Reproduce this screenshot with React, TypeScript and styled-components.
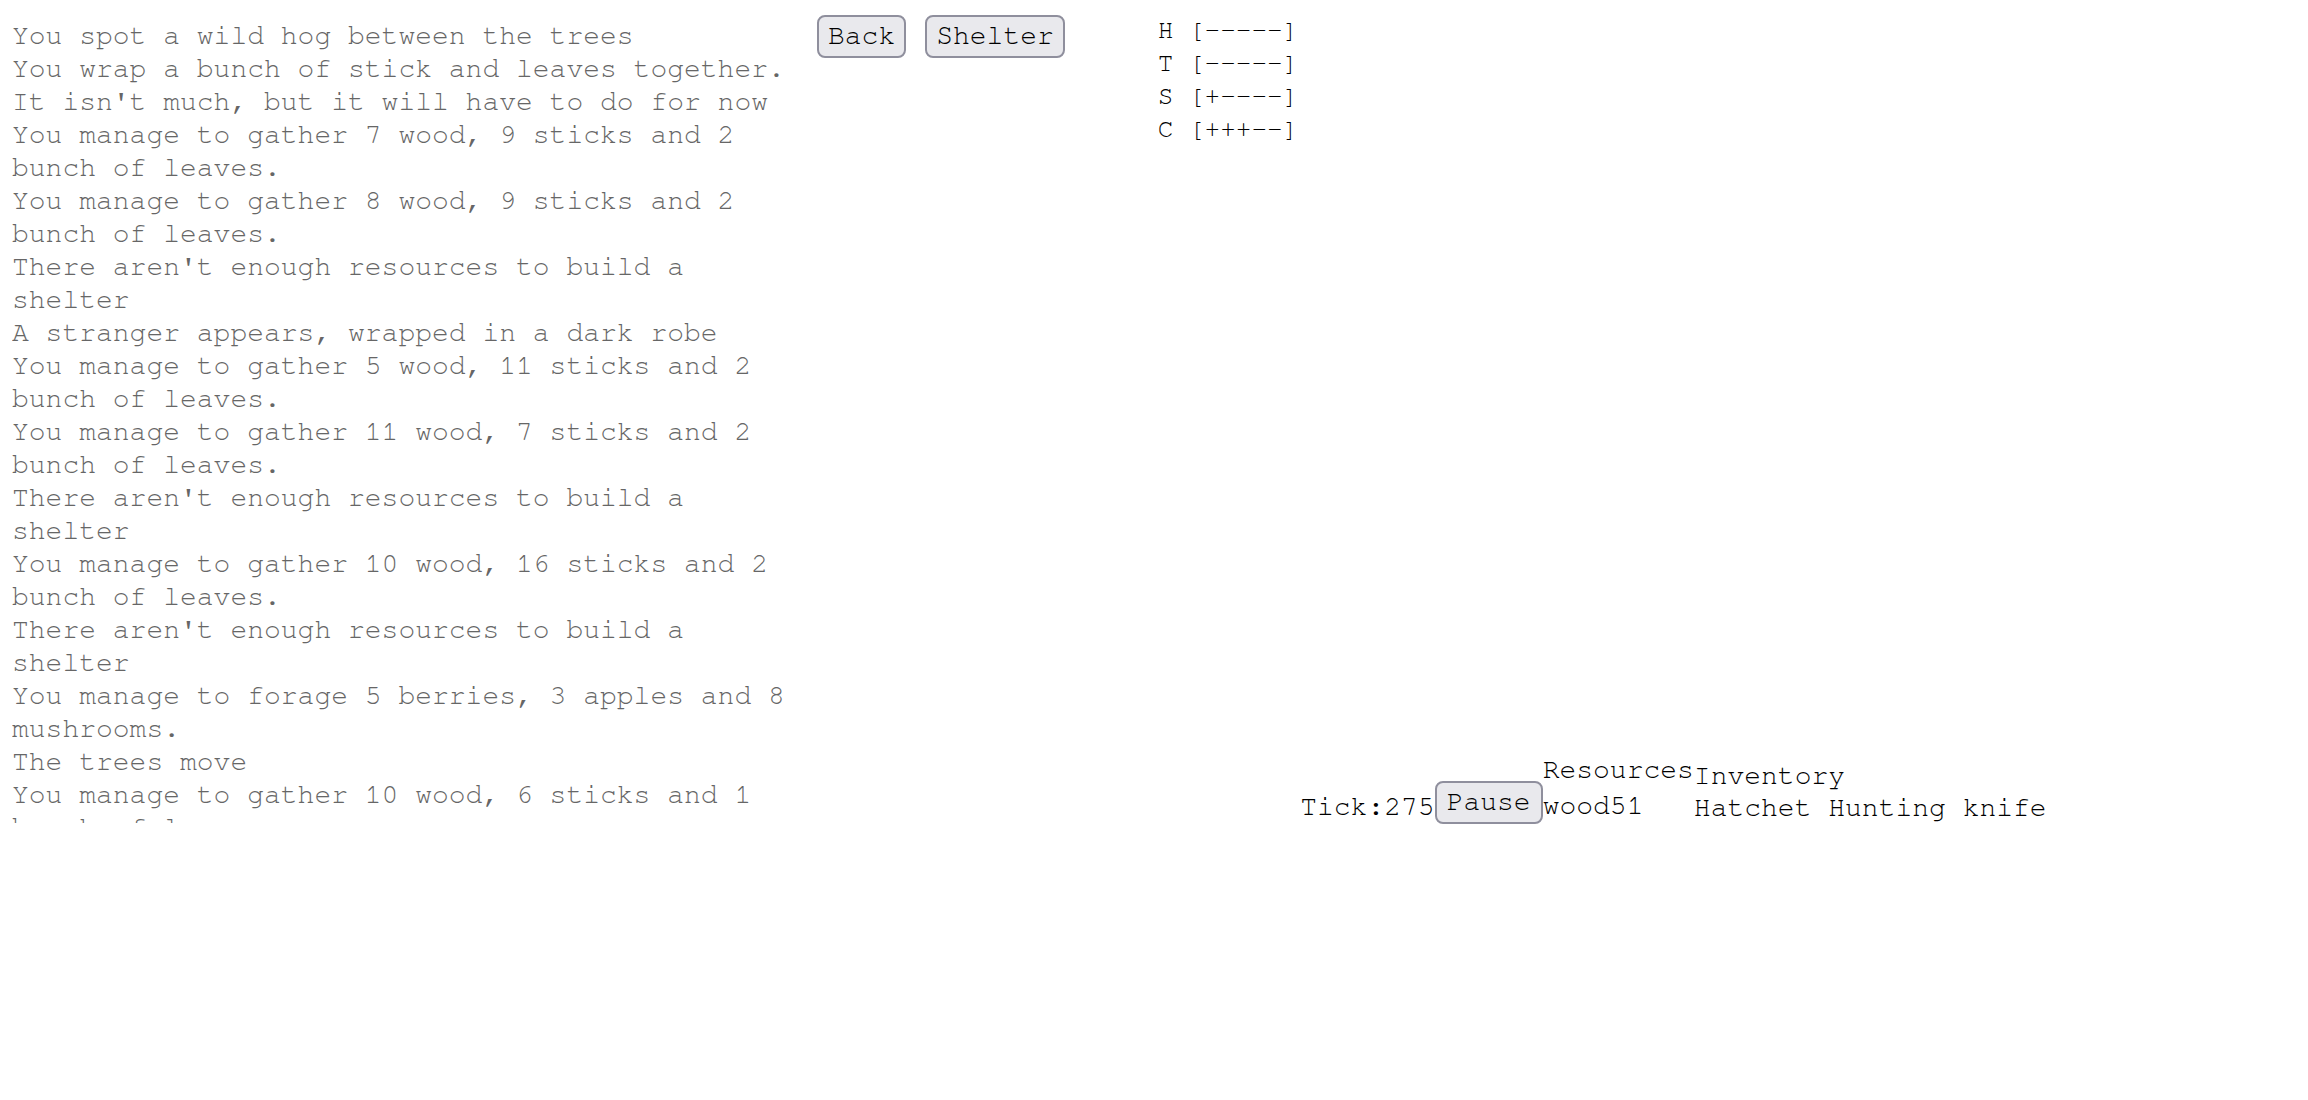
import * as React from "react";
import styled, { createGlobalStyle } from "styled-components";

const mono = `"Nimbus Mono PS", "Nimbus Mono", FreeMono, Courier, "Liberation Mono", monospace`;

const GlobalStyle = createGlobalStyle`
  html, body {
    margin: 0;
    padding: 0;
    background: #ffffff;
  }
  body {
    padding: 16px 16px 16px 12px;
    font-family: ${mono};
    color: #000000;
  }
`;

const Page = styled.div`
  display: flex;
  align-items: flex-start;
`;

const Log = styled.div`
  width: 794px;
  height: 803px;
  padding-top: 4px;
  overflow: hidden;
  font-size: 28px;
  line-height: 33px;
  color: #666666;
`;

const Entry = styled.div`
  white-space: normal;
`;

const Controls = styled.div`
  display: flex;
  gap: 19px;
  margin-left: 11px;
  margin-top: -1px;
`;

const Button = styled.button<{ wide?: boolean }>`
  box-sizing: border-box;
  height: 43px;
  font-family: ${mono};
  font-size: 28px;
  line-height: 39px;
  color: #000000;
  background: #e9e9ed;
  border: 2px solid #8f8f9d;
  border-radius: 8px;
  padding: 0 ${p => (p.wide ? 10 : 9)}px;
  margin: 0;
  cursor: pointer;
`;

const Status = styled.div`
  margin-left: 93px;
  margin-top: -2px;
  font-size: 26px;
  line-height: 33px;
  white-space: pre;
`;

const Footer = styled.div`
  align-self: flex-end;
  display: flex;
  align-items: flex-end;
  margin-left: 2px;
  margin-bottom: -1px;
  font-size: 28px;
  line-height: 33px;
`;

const Tick = styled.span`
  white-space: pre;
`;

const Table = styled.div<{ pitch: number }>`
  display: flex;
  flex-direction: column;
  font-size: 28px;
  line-height: ${p => p.pitch}px;
  white-space: pre;
`;

const log = [
  "You spot a wild hog between the trees",
  "You wrap a bunch of stick and leaves together. It isn't much, but it will have to do for now",
  "You manage to gather 7 wood, 9 sticks and 2 bunch of leaves.",
  "You manage to gather 8 wood, 9 sticks and 2 bunch of leaves.",
  "There aren't enough resources to build a shelter",
  "A stranger appears, wrapped in a dark robe",
  "You manage to gather 5 wood, 11 sticks and 2 bunch of leaves.",
  "You manage to gather 11 wood, 7 sticks and 2 bunch of leaves.",
  "There aren't enough resources to build a shelter",
  "You manage to gather 10 wood, 16 sticks and 2 bunch of leaves.",
  "There aren't enough resources to build a shelter",
  "You manage to forage 5 berries, 3 apples and 8 mushrooms.",
  "The trees move",
  "You manage to gather 10 wood, 6 sticks and 1 bunch of leaves.",
  "You manage to gather 6 wood, 8 sticks and 2 bunch of leaves.",
];

const bars = ["H [-----]", "T [-----]", "S [+----]", "C [+++--]"];

export default function App() {
  return (
    <>
      <GlobalStyle />
      <Page>
        <Log>
          {log.map((line, i) => (
            <Entry key={i}>{line}</Entry>
          ))}
        </Log>
        <Controls>
          <Button>Back</Button>
          <Button>Shelter</Button>
        </Controls>
        <Status>
          {bars.map(b => (
            <div key={b}>{b}</div>
          ))}
        </Status>
        <Footer>
          <Tick>Tick:275</Tick>
          <Button wide>Pause</Button>
          <Table pitch={36}>
            <span>Resources</span>
            <span>wood51</span>
          </Table>
          <Table pitch={32}>
            <span>Inventory</span>
            <span>Hatchet Hunting knife</span>
          </Table>
        </Footer>
      </Page>
    </>
  );
}
